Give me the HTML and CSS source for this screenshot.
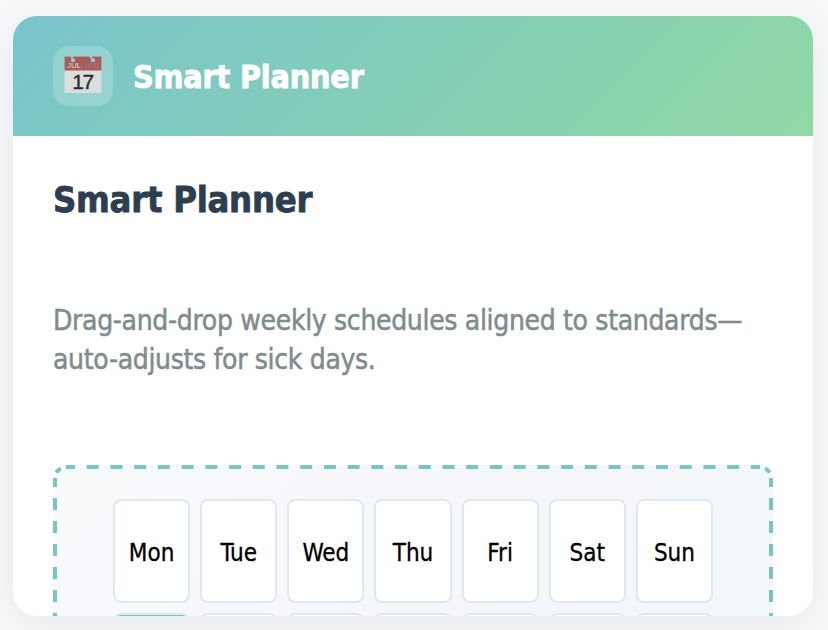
FILE: index.html
```
<!DOCTYPE html>
<html lang="en">
<head>
    <meta charset="UTF-8">
    <meta name="viewport" content="width=device-width, initial-scale=1.0">
    <title>Smart Planner</title>
    <link rel="stylesheet" href="styles.css">
</head>
<body>
    <div class="card">
        <div class="card-header">
            <div class="icon">
                <svg width="38" height="38" viewBox="0 0 38 38">
                    <rect x="0.5" y="0.5" width="37" height="36.5" fill="#dcdddd"/>
                    <path d="M0.5 0.5h37v14h-37z" fill="#a45e5e"/>
                    <path d="M8 0v3M26 0l2.5 3" stroke="#d5d5d5" stroke-width="1.3"/>
                    <circle cx="9" cy="4.3" r="2" fill="#8ed3c8"/>
                    <circle cx="29" cy="4.3" r="2" fill="#8ed3c8"/>
                    <path d="M22 8v5M25 8v5M28 7v6M31 6.5v6.5M34 6v7" stroke="#b57979" stroke-width="1.2" stroke-dasharray="1 0.6"/>
                    <text class="icon-month" x="3" y="12.4" textLength="14">JUL</text>
                    <text class="icon-day" x="8.3" y="32.6" textLength="22">17</text>
                </svg>
            </div>
            <h1>Smart Planner</h1>
        </div>
        <div class="card-body">
            <h2>Smart Planner</h2>
            <p>Drag-and-drop weekly schedules aligned to standards—<br>auto-adjusts for sick days.</p>
            <div class="planner">
                <svg class="dashes" viewBox="0 0 720 290">
                    <path d="M13 2H707" stroke-dasharray="12 11.72" stroke-dashoffset="3"/>
                    <path d="M2 13V290M718 13V290" stroke-dasharray="12 11" stroke-dashoffset="3"/>
                    <path d="M3.4 7.6Q4.8 5 7.8 3.5M716.6 7.6Q715.2 5 712.2 3.5"/>
                </svg>
                <div class="week">
                    <div class="day">Mon</div>
                    <div class="day">Tue</div>
                    <div class="day">Wed</div>
                    <div class="day">Thu</div>
                    <div class="day">Fri</div>
                    <div class="day">Sat</div>
                    <div class="day">Sun</div>
                    <div class="day filled"></div>
                    <div class="day"></div>
                    <div class="day"></div>
                    <div class="day"></div>
                    <div class="day"></div>
                    <div class="day"></div>
                    <div class="day"></div>
                </div>
            </div>
        </div>
    </div>
</body>
</html>
```
FILE: styles.css
```
* {
    margin: 0;
    padding: 0;
    box-sizing: border-box;
}

body {
    font-family: Tahoma, 'DejaVu Sans Condensed', 'DejaVu Sans', sans-serif;
    background: #f8f9fb;
    height: 100vh;
    padding: 16px 15px 14px 13px;
    overflow: hidden;
}

.card {
    width: 800px;
    height: 600px;
    background: white;
    border-radius: 24px;
    box-shadow: 0 8px 40px rgba(0, 0, 0, 0.08);
    overflow: hidden;
}

.card-header {
    display: flex;
    align-items: center;
    gap: 20px;
    height: 120px;
    padding: 30px 40px;
    background: linear-gradient(135deg, #78c4cb, #91d8a4);
    color: white;
}

.icon {
    display: flex;
    align-items: center;
    justify-content: center;
    width: 60px;
    height: 60px;
    padding-bottom: 3px;
    border-radius: 16px;
    background: rgba(255, 255, 255, 0.2);
}

.icon-month {
    font: 8px 'Liberation Sans', sans-serif;
    fill: #e8d3d3;
}

.icon-day {
    font: 21px 'Liberation Sans', sans-serif;
    fill: #2d2d2d;
    stroke: #2d2d2d;
    stroke-width: 0.4;
}

.card-header h1 {
    font-size: 32px;
    letter-spacing: -0.2px;
    padding-top: 2px;
    -webkit-text-stroke: 0.8px white;
}

.card-body {
    padding: 40px;
}

.card-body h2 {
    font-size: 36px;
    line-height: 48px;
    letter-spacing: -0.25px;
    color: #2d3e50;
    margin-bottom: 77px;
    -webkit-text-stroke: 0.8px #2d3e50;
}

.card-body p {
    font-size: 28px;
    line-height: 39px;
    letter-spacing: -0.33px;
    color: #7f8c8d;
    margin-bottom: 86px;
    white-space: nowrap;
    -webkit-text-stroke: 0.5px #7f8c8d;
}

.planner {
    position: relative;
    border-radius: 14px;
    padding: 34px 60px;
    background: linear-gradient(135deg, #f8fafc, #f4f6fa 60%, #f2f8fa);
}

/* dashed frame over the planner's edge */
.dashes {
    position: absolute;
    top: 0;
    left: 0;
    width: 720px;
    height: 290px;
    fill: none;
    stroke: #78c5c8;
    stroke-width: 4;
}

.week {
    display: grid;
    grid-template-columns: repeat(7, 1fr);
    grid-auto-rows: 104px;
    gap: 10px;
}

.day {
    display: flex;
    align-items: center;
    justify-content: center;
    padding-top: 4px;
    border: 2px solid #e2e7ee;
    border-radius: 8px;
    background: white;
    color: black;
    font-size: 24px;
    -webkit-text-stroke: 0.3px black;
}

.day.filled {
    background: #78c5c8;
}
```
